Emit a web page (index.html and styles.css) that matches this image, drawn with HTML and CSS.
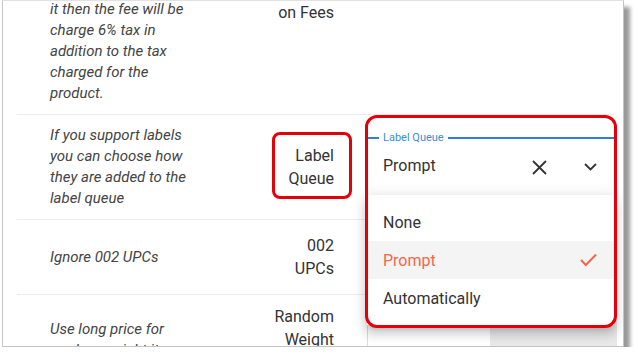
FILE: index.html
```html
<!DOCTYPE html>
<html lang="en">
<head>
    <meta charset="UTF-8">
    <meta name="viewport" content="width=device-width, initial-scale=1.0">
    <title>Store Settings - Label Queue</title>
    <link rel="stylesheet" href="styles.css">
</head>
<body>

    <div class="frame">
        <div class="settings">

            <div class="row row-cut">
                <div class="desc">it then the fee will be charge 6% tax in addition to the tax charged for the product.</div>
                <div class="name">on Fees</div>
                <div class="value"></div>
            </div>

            <div class="row">
                <div class="desc">If you support labels you can choose how they are added to the label queue</div>
                <div class="name marked">Label Queue</div>
                <div class="value">
                    <div class="select">
                        <span class="select-label">Label Queue</span>
                        <span class="select-text">Prompt</span>
                        <svg class="icon-clear" width="15" height="15" viewBox="0 0 15 15">
                            <path d="M1 1 L14 14 M14 1 L1 14" />
                        </svg>
                        <svg class="icon-arrow" width="13" height="8" viewBox="0 0 13 8">
                            <path d="M1 1 L6.5 6.5 L12 1" />
                        </svg>
                        <ul class="menu">
                            <li>None</li>
                            <li class="selected">Prompt
                                <svg width="17" height="14" viewBox="0 0 17 14">
                                    <path d="M1 7 L5.8 12 L16 1.5" />
                                </svg>
                            </li>
                            <li>Automatically</li>
                        </ul>
                    </div>
                    <div class="callout"></div>
                </div>
            </div>

            <div class="row">
                <div class="desc">Ignore 002 UPCs</div>
                <div class="name">002 UPCs</div>
                <div class="value"></div>
            </div>

            <div class="row">
                <div class="desc">Use long price for random weight items</div>
                <div class="name">Random Weight Price</div>
                <div class="value">
                    <div class="toggle">
                        <span class="toggle-off"></span>
                        <span class="toggle-on"></span>
                    </div>
                </div>
            </div>

        </div>
    </div>

</body>
</html>
```

FILE: styles.css
```css
body {
    margin: 0;
    background-color: #fff;
    font-family: Roboto, "Liberation Sans", sans-serif;
}

.frame {
    width: 620px;
    height: 345px;
    margin-left: 2px;
    border: 1px solid #c4c4c4;
    border-top-color: #e2e2e2;
    background-color: #fff;
    overflow: hidden;
    box-shadow: 6px 7px 4px rgba(0, 0, 0, 0.4);
}

.settings {
    margin-top: -12px;
}

.row {
    display: flex;
    align-items: center;
    min-height: 54px;
    margin: 0 9px 0 14px;
    padding: 10px 0 10px 33px;
    border-bottom: 1px solid #ececec;
}

.row-cut {
    align-items: flex-start;
}

.row-cut .name {
    padding-top: 2px;
}

.desc {
    width: 146px;
    font-size: 15px;
    line-height: 21px;
    font-style: italic;
    color: #444;
}

.name {
    position: relative;
    width: 64px;
    margin-left: auto;
    font-size: 16px;
    line-height: 23px;
    text-align: right;
    color: #333;
}

.value {
    position: relative;
    width: 247px;
    margin-left: 33px;
}

/* red annotation boxes */
.marked::after {
    content: "";
    position: absolute;
    left: 2px;
    right: -18px;
    top: -12px;
    bottom: -9px;
    border: 3px solid #e3000b;
    border-radius: 8px;
}

.callout {
    position: absolute;
    left: -2px;
    right: -3px;
    top: -22px;
    height: 213px;
    box-sizing: border-box;
    border: 3.5px solid #e3000b;
    border-radius: 12px;
    z-index: 3;
    pointer-events: none;
}

/* open select */
.select {
    position: relative;
    display: flex;
    align-items: center;
    height: 56px;
    padding: 0 17px 0 16px;
    border-top: 2px solid #2e7fd5;
    border-bottom: 2px solid #2e7fd5;
    background-color: #fff;
}

.select-label {
    position: absolute;
    top: -8px;
    left: 12px;
    padding: 0 4px;
    font-size: 11px;
    line-height: 13px;
    color: #3d8ade;
    background-color: #fff;
}

.select-text {
    flex: 1;
    margin-top: -4px;
    font-size: 16px;
    color: #333;
}

.select svg path {
    fill: none;
    stroke: #333;
    stroke-width: 1.8;
}

.icon-clear {
    margin-right: 37px;
}

.icon-arrow path {
    stroke-width: 2;
}

.menu {
    position: absolute;
    top: 100%;
    left: 0;
    right: 0;
    margin: 0;
    padding: 8px 0;
    list-style: none;
    background-color: #fff;
    box-shadow: 0 5px 5px -3px rgba(0, 0, 0, 0.2),
                0 8px 10px 1px rgba(0, 0, 0, 0.14),
                0 3px 14px 2px rgba(0, 0, 0, 0.12);
    z-index: 2;
}

.menu li {
    display: flex;
    align-items: center;
    justify-content: space-between;
    height: 38px;
    padding: 0 17px 0 16px;
    font-size: 16px;
    color: #333;
}

.menu li.selected {
    color: #f2664a;
    background-color: #f4f4f4;
}

.menu li.selected path {
    fill: none;
    stroke: #f2664a;
    stroke-width: 2;
}

/* control under the menu */
.toggle {
    display: flex;
    height: 56px;
    border-left: 1px solid #dcdcdc;
}

.toggle-off {
    width: 122px;
    background-color: #fff;
}

.toggle-on {
    flex: 1;
    margin-right: -3px;
    background-color: #e8e8e8;
}
```
